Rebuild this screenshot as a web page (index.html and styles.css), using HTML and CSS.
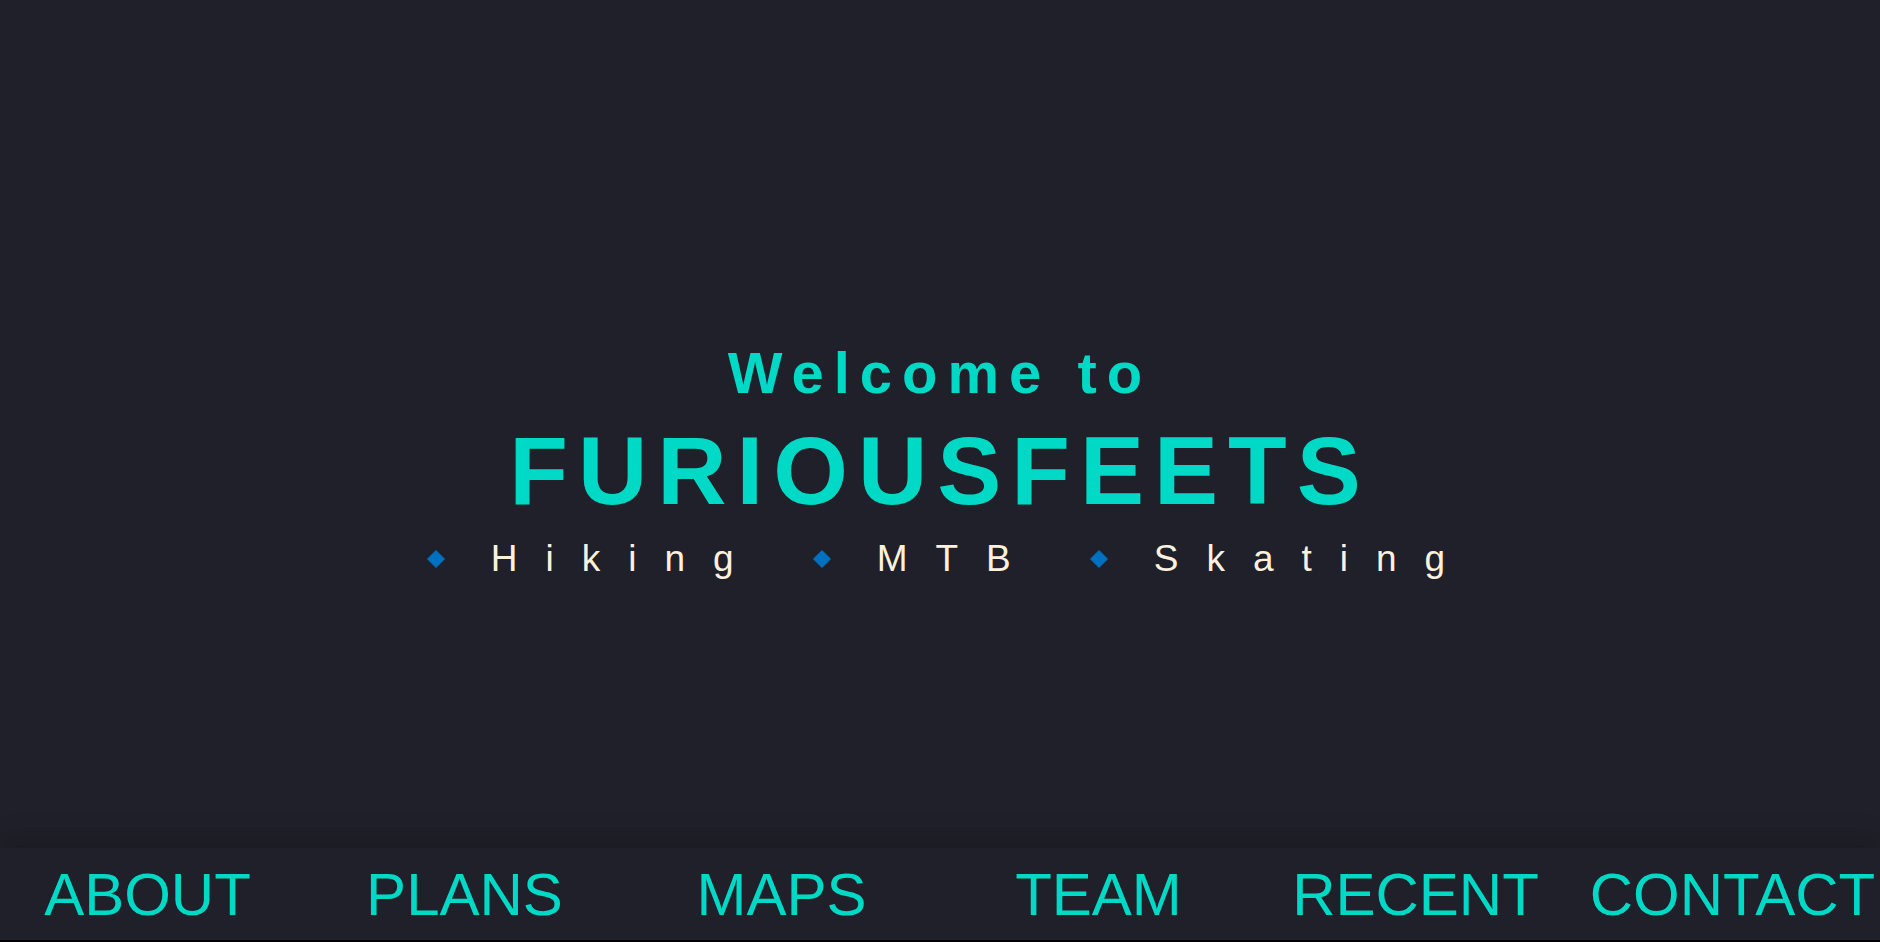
FILE: index.html
```html
<!DOCTYPE html>
<html lang="en">
<head>
<meta charset="utf-8">
<title>Furiousfeets</title>
<link rel="stylesheet" href="styles.css">
</head>
<body>
<div class="page">
  <header class="hero">
    <h2 class="welcome">Welcome to</h2>
    <h1 class="brand">FURIOUSFEETS</h1>
    <ul class="tags">
      <li class="tag"><svg class="diamond" viewBox="0 0 18 18" width="18" height="18"><polygon points="9,0.5 17.5,9 9,17.5 0.5,9" stroke-linejoin="round"/></svg><span class="tag-text">Hiking</span></li>
      <li class="tag"><svg class="diamond" viewBox="0 0 18 18" width="18" height="18"><polygon points="9,0.5 17.5,9 9,17.5 0.5,9" stroke-linejoin="round"/></svg><span class="tag-text">MTB</span></li>
      <li class="tag"><svg class="diamond" viewBox="0 0 18 18" width="18" height="18"><polygon points="9,0.5 17.5,9 9,17.5 0.5,9" stroke-linejoin="round"/></svg><span class="tag-text">Skating</span></li>
    </ul>
  </header>
  <nav class="nav">
    <ul class="nav-list">
      <li class="nav-item">ABOUT</li>
      <li class="nav-item">PLANS</li>
      <li class="nav-item">MAPS</li>
      <li class="nav-item">TEAM</li>
      <li class="nav-item">RECENT</li>
      <li class="nav-item">CONTACT</li>
    </ul>
  </nav>
</div>
</body>
</html>
```
FILE: styles.css
```css
html, body {
  margin: 0;
  padding: 0;
  background: #000;
}
body {
  font-family: "Liberation Sans", Arial, sans-serif;
  overflow: hidden;
}
.page {
  width: 1880px;
  height: 940px;
  display: flex;
  flex-direction: column;
  background: #1f2029;
  overflow: hidden;
}
.hero {
  height: 848px;
  box-sizing: border-box;
  padding-top: 344px;
  display: flex;
  flex-direction: column;
  align-items: center;
  flex: none;
}
.welcome {
  margin: 0;
  font-size: 58px;
  line-height: 58px;
  font-weight: bold;
  letter-spacing: 10px;
  color: #00d9c6;
}
.brand {
  margin: 21px 0 0;
  font-size: 96px;
  line-height: 96px;
  font-weight: bold;
  letter-spacing: 10px;
  color: #00d9c6;
}
.tags {
  list-style: none;
  margin: 21px 0 0;
  padding: 0 0 0 20px;
  display: flex;
  gap: 51px;
}
.tag {
  display: flex;
  align-items: center;
  font-size: 37px;
  line-height: 37px;
  letter-spacing: 28px;
  color: #fdf0de;
}
.diamond {
  fill: #0070c0;
  stroke: #0070c0;
  stroke-width: 1;
  margin-right: 46px;
  flex: none;
}
.nav {
  flex: 1;
  background: #1f2029;
  box-shadow: 0 -14px 22px rgba(0, 0, 0, 0.12);
  position: relative;
}
.nav-list {
  list-style: none;
  margin: 0 0 0 -11px;
  padding: 1px 0 0;
  display: grid;
  grid-template-columns: repeat(6, 317px);
}
.nav-item {
  text-align: center;
  font-size: 60px;
  line-height: 91px;
  color: #00d9c6;
  white-space: nowrap;
}
```
